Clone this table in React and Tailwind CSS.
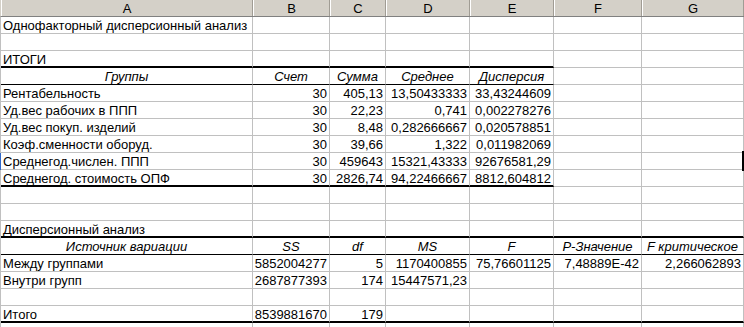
const COLS = ['w-[252px]', 'w-[77px]', 'w-[56px]', 'w-[84px]', 'w-[84px]', 'w-[88px]', 'w-[102px]'];
const LETTERS = ['A', 'B', 'C', 'D', 'E', 'F', 'G'];

// h: italic centered heading cell
const h = (t) => ({ t, h: true });

const ROWS = [
  { cells: ['Однофакторный дисперсионный анализ'] },
  { cells: [] },
  { cells: ['ИТОГИ'], line: 'thick', span: 5 },
  { cells: [h('Группы'), h('Счет'), h('Сумма'), h('Среднее'), h('Дисперсия')], line: 'thin', span: 5 },
  { cells: ['Рентабельность', '30', '405,13', '13,50433333', '33,43244609'] },
  { cells: ['Уд.вес рабочих в ППП', '30', '22,23', '0,741', '0,002278276'] },
  { cells: ['Уд.вес покуп. изделий', '30', '8,48', '0,282666667', '0,020578851'] },
  { cells: ['Коэф.сменности оборуд.', '30', '39,66', '1,322', '0,011982069'] },
  { cells: ['Среднегод.числен. ППП', '30', '459643', '15321,43333', '92676581,29'], mark: true },
  { cells: ['Среднегод. стоимость ОПФ', '30', '2826,74', '94,22466667', '8812,604812'], line: 'thick', span: 5 },
  { cells: [] },
  { cells: [] },
  { cells: ['Дисперсионный анализ'], line: 'thick', span: 7 },
  {
    cells: [h('Источник вариации'), h('SS'), h('df'), h('MS'), h('F'), h('P-Значение'), h('F критическое')],
    line: 'thin',
    span: 7,
  },
  { cells: ['Между группами', '5852004277', '5', '1170400855', '75,76601125', '7,48889E-42', '2,266062893'] },
  { cells: ['Внутри групп', '2687877393', '174', '15447571,23'] },
  { cells: [] },
  { cells: ['Итого', '8539881670', '179'], line: 'thick', span: 7 },
  { cells: [] },
];

function bottomLine(line, inSpan) {
  if (!inSpan || !line) return 'border-b border-b-[#c0c0c0]';
  if (line === 'thick') return 'border-b-2 border-b-black';
  return 'border-b border-b-black';
}

function Cell({ value, col, line, inSpan }) {
  const isHead = value && typeof value === 'object';
  const text = isHead ? value.t : value;
  const align = isHead ? 'justify-center italic' : col === 0 ? 'justify-start' : 'justify-end';
  return (
    <div
      className={`${COLS[col]} ${bottomLine(line, inSpan)} ${align} flex h-[17px] shrink-0 items-start border-r border-r-[#c0c0c0] px-[2px] pt-px leading-4 whitespace-nowrap`}
    >
      {text}
    </div>
  );
}

function ColumnHeader() {
  return (
    <div className="flex h-[17px] bg-[#d4d0c8] border-b border-b-[#808080] border-l border-l-[#d4d0c8]">
      {LETTERS.map((l, i) => (
        <div
          key={l}
          className={`${COLS[i]} flex shrink-0 justify-center border-r border-r-[#a09c94] border-l border-l-white pt-px leading-4`}
        >
          {l}
        </div>
      ))}
    </div>
  );
}

export default function App() {
  return (
    <div className="relative h-[327px] w-[744px] overflow-hidden bg-white font-['Liberation_Sans',Arial,sans-serif] text-[13px] text-black">
      <ColumnHeader />
      {ROWS.map((row, r) => (
        <div
          key={r}
          className={`flex ${row.mark ? 'border-l border-l-[#3168c8]' : 'border-l border-l-[#c0c0c0]'}`}
        >
          {COLS.map((_, c) => (
            <Cell
              key={c}
              col={c}
              value={row.cells[c] ?? ''}
              line={row.line}
              inSpan={c < (row.span ?? 0)}
            />
          ))}
        </div>
      ))}
      {/* edge of the active cell, just off to the right */}
      <div className="absolute left-[742px] top-[151px] h-[20px] w-[2px] bg-black" />
    </div>
  );
}
